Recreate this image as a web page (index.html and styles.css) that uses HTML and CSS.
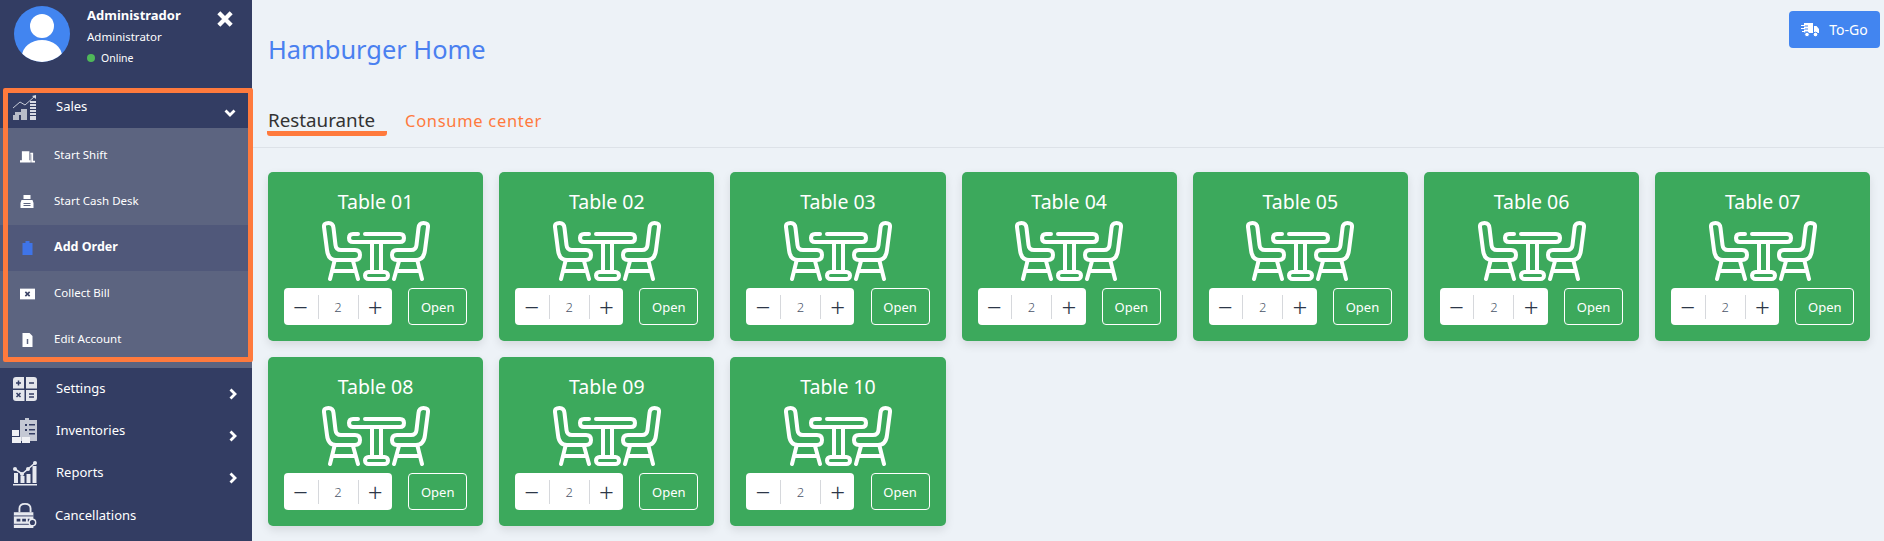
FILE: index.html
```html
<!DOCTYPE html>
<html>
<head>
    <meta charset="UTF-8">
    <title>Hamburger Home</title>
    <link rel="stylesheet" href="styles.css">
</head>
<body>
<svg class="defs">
    <symbol id="chair" viewBox="0 0 40 60">
        <path d="M2 6 L5 29 Q6 39 14 39 L33 39 Q38 39 38 34 Q38 29 33 29 L19 29 Q14 29 13.500 24 L11.500 7 Q11 2 6.500 2 Q1.500 2 2 6Z"/>
        <path d="M12.500 40 L8 58 M31 40 L36 58 M10.500 50 L33.500 50"/>
    </symbol>
    <symbol id="table" viewBox="0 0 108 60">
        <g fill="none" stroke="#fff" stroke-width="4" stroke-linecap="round" stroke-linejoin="round">
            <use href="#chair" width="40" height="60"/>
            <use href="#chair" width="40" height="60" transform="matrix(-1 0 0 1 108 0)"/>
            <path d="M36 13 L31 13 Q27 13 27 17 Q27 21 31 21 L78 21 Q82 21 82 17 Q82 13 78 13 L43 13"/>
            <path d="M50 22 L50 50 M59 22 L59 50"/>
            <rect x="43" y="51" width="23" height="7" rx="3.500"/>
        </g>
    </symbol>
    <symbol id="chev-right" viewBox="0 0 10 12">
        <path d="M2.500 1.500 L7 6 L2.500 10.500" fill="none" stroke="#fff" stroke-width="2.800"/>
    </symbol>
</svg>

<div class="app">
    <aside class="sidebar">
        <div class="profile">
            <svg class="avatar" viewBox="0 0 56 56">
                <defs><clipPath id="avatarClip"><circle cx="28" cy="28" r="28"/></clipPath></defs>
                <circle cx="28" cy="28" r="28" fill="#4285f0"/>
                <g clip-path="url(#avatarClip)" fill="#fff">
                    <circle cx="28" cy="20" r="12"/>
                    <ellipse cx="28" cy="50" rx="20" ry="16"/>
                </g>
            </svg>
            <div class="profile-text">
                <div class="profile-name">Administrador</div>
                <div class="profile-role">Administrator</div>
                <div class="profile-status"><span class="dot"></span>Online</div>
            </div>
            <svg class="close" viewBox="0 0 16 16">
                <path d="M2.500 2.500 L13.500 13.500 M13.500 2.500 L2.500 13.500" stroke="#fff" stroke-width="3.800" fill="none"/>
            </svg>
        </div>

        <div class="menu-item menu-sales">
            <svg class="menu-icon" viewBox="0 0 26 26" fill="#d8dbe4">
                <path d="M1 13 L8 7 L13 10 L22 2" fill="none" stroke="#c8ccd8" stroke-width="1"/>
                <path d="M20 1 L24 0 L24 4Z"/>
                <path d="M1 20h6v5H1z M3 17h6v3H3z M9 14h6v11H9z" fill="#b8bcc8"/>
                <path d="M18 6h6v2h-6z M18 9h6v2h-6z M18 12h6v2h-6z M18 15h6v2h-6z M18 18h6v2h-6z M18 21h6v4h-6z"/>
            </svg>
            <span>Sales</span>
            <svg class="chev chev-down" viewBox="0 0 12 10"><path d="M1.500 2.500 L6 7 L10.500 2.500" fill="none" stroke="#fff" stroke-width="2.800"/></svg>
        </div>

        <div class="submenu">
            <div class="sub-item">
                <svg class="sub-icon" viewBox="0 0 16 14" fill="#fff"><path d="M0 14V11.500h2V2h8v9.500h1V3.500h3V12h2v2h-4V5h-.5v9z"/></svg>
                <span>Start Shift</span>
            </div>
            <div class="sub-item">
                <svg class="sub-icon" viewBox="0 0 14 14" fill="#fff"><path d="M3 0h7v4H3z M1 5h11l1 3v5H0V8z"/><path d="M3 8h7v1H3zM3 10h7v1H3z" fill="#5c6480"/></svg>
                <span>Start Cash Desk</span>
            </div>
            <div class="sub-item active">
                <svg class="sub-icon" viewBox="0 0 14 14" fill="#3f74e8"><path d="M2 2h3V0h4v2h3v12H2z"/></svg>
                <span>Add Order</span>
            </div>
            <div class="sub-item">
                <svg class="sub-icon" viewBox="0 0 14 12"><path d="M0 1h14v10H0z" fill="#fff"/><path d="M5 4 L9 8 M9 4 L5 8" stroke="#3c4466" stroke-width="1.500"/></svg>
                <span>Collect Bill</span>
            </div>
            <div class="sub-item">
                <svg class="sub-icon" viewBox="0 0 12 14"><path d="M1 0h7l3 3v11H1z" fill="#fff"/><path d="M6 6v5" stroke="#5c6480" stroke-width="1.500"/></svg>
                <span>Edit Account</span>
            </div>
        </div>

        <div class="menu-item">
            <svg class="menu-icon" viewBox="0 0 26 26">
                <path d="M1 4q0-3 3-3h8v11.500H1z M14 1h8q3 0 3 3v8.500H14z M1 14h11.500V25H4q-3 0-3-3z M14 14h11v8q0 3-3 3h-8z" fill="#e4e6ec"/>
                <path d="M4 7h5M6.500 4.500v5M17 7h5M4.500 17l4 4M8.500 17l-4 4M17 18h5M17 21h5" stroke="#333d63" stroke-width="1.500" fill="none"/>
            </svg>
            <span>Settings</span>
            <svg class="chev"><use href="#chev-right"/></svg>
        </div>
        <div class="menu-item">
            <svg class="menu-icon" viewBox="0 0 26 26">
                <path d="M8 2h5V0h4v2h8v21H8z" fill="#c4c8d4"/>
                <path d="M13 6h2v2h-2zM13 11h2v2h-2zM17 6h6v1.500h-6zM17 11h6v1.500h-6zM17 15h6v1.500h-6z" fill="#333d63"/>
                <path d="M0 12h7v6H0z M0 19h9v6H0z M10 19h8v6h-8z" fill="#f0f1f5"/>
            </svg>
            <span>Inventories</span>
            <svg class="chev"><use href="#chev-right"/></svg>
        </div>
        <div class="menu-item">
            <svg class="menu-icon" viewBox="0 0 26 26" fill="#e8eaf0">
                <path d="M1 24h24v1.500H1z M2 13h4v10H2z M8.500 16h4v7h-4z M14.500 14h4v9h-4z M20.500 6h4v17h-4z"/>
                <path d="M3 9 L10 14 L16 9 L23 3" fill="none" stroke="#e8eaf0" stroke-width="1.600"/>
                <circle cx="3" cy="9" r="2"/><circle cx="10" cy="14" r="2"/><circle cx="16" cy="9" r="2"/><circle cx="23" cy="3" r="2"/>
            </svg>
            <span>Reports</span>
            <svg class="chev"><use href="#chev-right"/></svg>
        </div>
        <div class="menu-item menu-plain">
            <svg class="menu-icon" viewBox="0 0 26 28">
                <path d="M7 11V7q0-5 6-5t6 5v4" fill="none" stroke="#e8eaf0" stroke-width="2"/>
                <path d="M1 11h21v17H1z" fill="#e8eaf0"/>
                <path d="M1 15h21M1 24h21" stroke="#333d63" stroke-width="1"/>
                <path d="M4 18h4v3H4zM10 18h4v3h-4zM16 18h2v3h-2z" fill="#333d63"/>
                <circle cx="21" cy="22" r="3.500" fill="#333d63" stroke="#e8eaf0" stroke-width="1.500"/>
            </svg>
            <span>Cancellations</span>
        </div>

        <div class="annotation"></div>
    </aside>

    <main class="main">
        <div class="top">
            <h1>Hamburger Home</h1>
            <button class="togo">
                <svg class="togo-icon" viewBox="0 0 18 14">
                    <path d="M3 0h9v10H3z M13 3h2.500l2.500 3v4h-5z" fill="#fff"/>
                    <path d="M0 3h7M1 6h6M2 9h5" stroke="#4285f0" stroke-width="1"/>
                    <path d="M0 2.500h4M0 5.500h4M1 8.500h3" stroke="#fff" stroke-width="1.200"/>
                    <circle cx="6" cy="11.500" r="2.300" fill="#fff" stroke="#4285f0"/>
                    <circle cx="14.500" cy="11.500" r="2.300" fill="#fff" stroke="#4285f0"/>
                </svg>
                To-Go
            </button>
        </div>

        <div class="tabs">
            <div class="tab active">Restaurante</div>
            <div class="tab">Consume center</div>
        </div>

        <div class="tables">
            <div class="card">
                <div class="card-title">Table 01</div>
                <svg class="table-icon"><use href="#table"/></svg>
                <div class="card-actions">
                    <div class="stepper"><span>&minus;</span><span class="count">2</span><span>+</span></div>
                    <button class="open">Open</button>
                </div>
            </div>
            <div class="card">
                <div class="card-title">Table 02</div>
                <svg class="table-icon"><use href="#table"/></svg>
                <div class="card-actions">
                    <div class="stepper"><span>&minus;</span><span class="count">2</span><span>+</span></div>
                    <button class="open">Open</button>
                </div>
            </div>
            <div class="card">
                <div class="card-title">Table 03</div>
                <svg class="table-icon"><use href="#table"/></svg>
                <div class="card-actions">
                    <div class="stepper"><span>&minus;</span><span class="count">2</span><span>+</span></div>
                    <button class="open">Open</button>
                </div>
            </div>
            <div class="card">
                <div class="card-title">Table 04</div>
                <svg class="table-icon"><use href="#table"/></svg>
                <div class="card-actions">
                    <div class="stepper"><span>&minus;</span><span class="count">2</span><span>+</span></div>
                    <button class="open">Open</button>
                </div>
            </div>
            <div class="card">
                <div class="card-title">Table 05</div>
                <svg class="table-icon"><use href="#table"/></svg>
                <div class="card-actions">
                    <div class="stepper"><span>&minus;</span><span class="count">2</span><span>+</span></div>
                    <button class="open">Open</button>
                </div>
            </div>
            <div class="card">
                <div class="card-title">Table 06</div>
                <svg class="table-icon"><use href="#table"/></svg>
                <div class="card-actions">
                    <div class="stepper"><span>&minus;</span><span class="count">2</span><span>+</span></div>
                    <button class="open">Open</button>
                </div>
            </div>
            <div class="card">
                <div class="card-title">Table 07</div>
                <svg class="table-icon"><use href="#table"/></svg>
                <div class="card-actions">
                    <div class="stepper"><span>&minus;</span><span class="count">2</span><span>+</span></div>
                    <button class="open">Open</button>
                </div>
            </div>
            <div class="card">
                <div class="card-title">Table 08</div>
                <svg class="table-icon"><use href="#table"/></svg>
                <div class="card-actions">
                    <div class="stepper"><span>&minus;</span><span class="count">2</span><span>+</span></div>
                    <button class="open">Open</button>
                </div>
            </div>
            <div class="card">
                <div class="card-title">Table 09</div>
                <svg class="table-icon"><use href="#table"/></svg>
                <div class="card-actions">
                    <div class="stepper"><span>&minus;</span><span class="count">2</span><span>+</span></div>
                    <button class="open">Open</button>
                </div>
            </div>
            <div class="card">
                <div class="card-title">Table 10</div>
                <svg class="table-icon"><use href="#table"/></svg>
                <div class="card-actions">
                    <div class="stepper"><span>&minus;</span><span class="count">2</span><span>+</span></div>
                    <button class="open">Open</button>
                </div>
            </div>
        </div>
    </main>
</div>
</body>
</html>
```

FILE: styles.css
```css
* {
    box-sizing: border-box;
}

html, body {
    margin: 0;
    height: 100%;
    overflow: hidden;
}

body {
    background: #edf2f7;
    font-family: "Noto Sans", "Open Sans", sans-serif;
    color: #2d3748;
}

.defs {
    display: none;
}

.app {
    display: flex;
    height: 541px;
}

/* sidebar */
.sidebar {
    position: relative;
    flex: 0 0 252px;
    background: #333d63;
    color: #fff;
}

.profile {
    display: flex;
    height: 93px;
    padding: 6px 0 0 14px;
}

.avatar {
    width: 56px;
    height: 56px;
    flex: none;
}

.profile-text {
    margin-left: 17px;
    flex: 1;
}

.profile-name {
    font-size: 13px;
    font-weight: 700;
    line-height: 18px;
}

.profile-role {
    font-size: 11.500px;
    line-height: 16px;
    margin-top: 5px;
}

.profile-status {
    font-size: 10.500px;
    line-height: 14px;
    margin-top: 6px;
    display: flex;
    align-items: center;
}

.dot {
    width: 8px;
    height: 8px;
    border-radius: 50%;
    background: #4fb859;
    margin-right: 6px;
}

.close {
    width: 18px;
    height: 18px;
    margin: 4px 18px 0 0;
    flex: none;
}

.menu-item {
    display: flex;
    height: 42px;
    padding: 0 0 0 12px;
    align-items: center;
    font-size: 13px;
    position: relative;
}

.menu-item span {
    margin-left: 18px;
    margin-top: -2px;
}

.menu-icon {
    width: 26px;
    height: 26px;
    flex: none;
}

.menu-sales {
    height: 35px;
}

.menu-sales .menu-icon {
    margin-top: -6px;
}

.menu-sales span {
    margin-top: -9px;
}

.menu-plain span {
    margin-left: 17px;
    margin-top: 0;
}

.chev {
    width: 10px;
    height: 12px;
    margin-left: auto;
    margin-right: 14px;
    margin-top: 10px;
}

.chev-down {
    width: 12px;
    height: 10px;
    margin-right: 16px;
    margin-top: 5px;
}

.submenu {
    background: #5c6480;
    padding: 5px 0;
}

.sub-item {
    display: flex;
    align-items: center;
    height: 46px;
    padding-left: 20px;
    font-size: 11.500px;
    color: #fff;
}

.sub-item span {
    margin-left: 19px;
    margin-top: -4px;
}

.sub-icon {
    width: 15px;
    height: 14px;
    flex: none;
}

.sub-item.active {
    background: #50587a;
    font-weight: 700;
    font-size: 12.500px;
}

/* orange highlight drawn over the sales group */
.annotation {
    position: absolute;
    left: 3px;
    top: 88px;
    width: 250px;
    height: 274px;
    border: 5px solid #ff7a3d;
    border-radius: 2px;
}

/* main */
.main {
    flex: 1;
    min-width: 0;
}

.top {
    display: flex;
    justify-content: space-between;
    height: 93px;
    padding: 11px 4px 0 16px;
}

h1 {
    margin: 20px 0 0;
    font-size: 25.400px;
    font-weight: 400;
    line-height: 36px;
    color: #4a80f0;
}

.togo {
    display: flex;
    align-items: center;
    justify-content: center;
    gap: 10px;
    width: 91px;
    height: 37px;
    background: #4285f0;
    border: 0;
    border-radius: 4px;
    color: #fff;
    font-family: inherit;
    font-size: 14px;
}

.togo-icon {
    width: 18px;
    height: 14px;
}

.tabs {
    display: flex;
    align-items: flex-start;
    gap: 16px;
    height: 55px;
    padding: 12px 0 0 15px;
    border-bottom: 1px solid #dde2e8;
}

.tab {
    height: 31px;
    font-size: 16.500px;
    line-height: 31px;
    color: #ff7a3d;
    letter-spacing: 0.700px;
    padding: 0 2px;
}

.tab.active {
    font-size: 18.800px;
    letter-spacing: 0;
    color: #333;
    width: 120px;
    padding: 0 1px;
    border-bottom: 5px solid #ff7a3d;
    border-radius: 3px;
}

.tables {
    display: grid;
    grid-template-columns: repeat(7, 215.200px);
    gap: 16px;
    padding: 24px 0 0 16px;
}

.card {
    display: flex;
    flex-direction: column;
    align-items: center;
    height: 169px;
    padding: 16px;
    background: #3ca95c;
    border-radius: 5px;
    box-shadow: 0 4px 10px rgba(0, 0, 0, 0.1);
    color: #fff;
}

.card-title {
    font-size: 19.500px;
    line-height: 28px;
}

.table-icon {
    width: 108px;
    height: 60px;
    margin-top: 5px;
}

.card-actions {
    display: flex;
    justify-content: space-between;
    width: 100%;
    margin-top: 7px;
}

.stepper {
    display: flex;
    align-items: center;
    width: 108px;
    height: 37px;
    background: #fff;
    border-radius: 4px;
    color: #2d3748;
}

.stepper span {
    flex: 1;
    text-align: center;
    font-size: 26px;
    line-height: 24px;
    font-weight: 300;
}

.stepper .count {
    flex: 0 0 41px;
    font-size: 13px;
    color: #4a5568;
    border-left: 1px solid #d6d8dc;
    border-right: 1px solid #d6d8dc;
}

.open {
    width: 59px;
    height: 37px;
    background: transparent;
    border: 1px solid #fff;
    border-radius: 4px;
    color: #fff;
    font-family: inherit;
    font-size: 13px;
    padding: 0;
}
```
